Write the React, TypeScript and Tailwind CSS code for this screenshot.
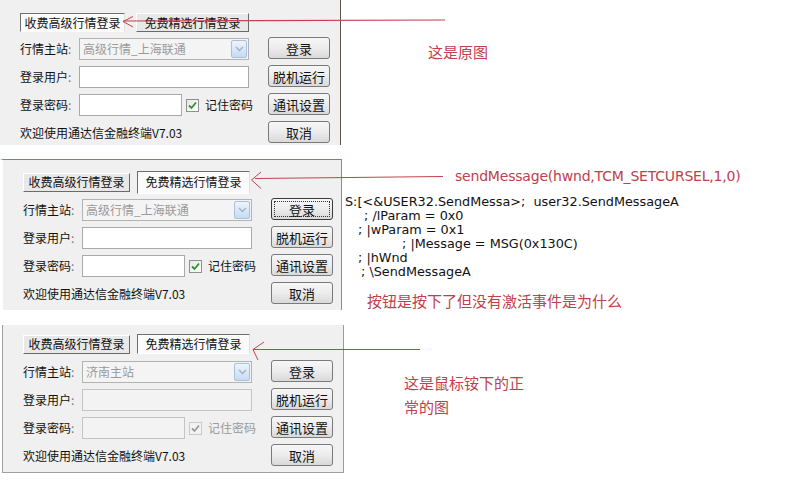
import React from "react";

const CJK = "font-['Noto_Sans_CJK_SC','Noto_Sans',sans-serif]";

function WinButton({ label, focused = false }: { label: string; focused?: boolean }) {
  return (
    <div
      className={`w-[62px] h-[22px] rounded-[3px] border ${
        focused ? "border-[#3a3a3a]" : "border-[#7a7a7a]"
      } bg-gradient-to-b from-[#f7f7f7] via-[#ececec] to-[#d9d9d9] flex items-center justify-center p-[2px]`}
    >
      <div
        className={`w-full h-full flex items-center justify-center text-[13px] leading-none text-[#111] ${
          focused ? "border border-dotted border-[#333]" : ""
        }`}
      >
        {label}
      </div>
    </div>
  );
}

function Check({ disabled = false }: { disabled?: boolean }) {
  return (
    <div
      className={`w-[13px] h-[13px] shrink-0 border ${
        disabled ? "border-[#c9c9c9] bg-[#f3f3f3]" : "border-[#8e8f8f] bg-gradient-to-br from-[#e6e6e6] to-white"
      } flex items-center justify-center`}
    >
      <svg width="11" height="11" viewBox="0 0 11 11">
        <path
          d="M2 5.5 L4.5 8 L9 2.5"
          fill="none"
          stroke={disabled ? "#9a9a9a" : "#2e8f2e"}
          strokeWidth="1.8"
        />
      </svg>
    </div>
  );
}

function Combo({ text }: { text: string }) {
  return (
    <div className="w-[170px] h-[22px] shrink-0 border border-[#b3b3b3] bg-[#f4f4f4] flex items-center justify-between pl-[3px] pr-[1px]">
      <span className="text-[12px] leading-none text-[#9a9a9a] whitespace-nowrap">{text}</span>
      <div className="w-[16px] h-[18px] rounded-[2px] border border-[#a9c0dc] bg-gradient-to-b from-[#eef4fc] to-[#c7dbf2] flex items-center justify-center">
        <svg width="9" height="6" viewBox="0 0 9 6">
          <path d="M1 1 L4.5 4.5 L8 1" fill="none" stroke="#9fb2cc" strokeWidth="1.4" />
        </svg>
      </div>
    </div>
  );
}

function Input({ w, disabled = false }: { w: string; disabled?: boolean }) {
  return (
    <div
      className={`${w} h-[22px] shrink-0 border ${
        disabled ? "border-[#c4c4c4] bg-[#f3f3f3]" : "border-[#a9a9a9] bg-white"
      }`}
    />
  );
}

function Label({ text }: { text: string }) {
  return (
    <div className="w-[59px] shrink-0 text-[12px] leading-none text-[#111] whitespace-nowrap">
      {text}
      <span className="text-[#777]">:</span>
    </div>
  );
}

function Tab({ text, selected, w, h }: { text: string; selected: boolean; w: string; h: string }) {
  return (
    <div
      className={`${w} ${h} shrink-0 whitespace-nowrap flex items-center justify-center text-[12px] leading-none text-[#111] ${
        selected
          ? "bg-[#fbfbfb] border-t border-l border-t-[#6f6f6f] border-l-[#6f6f6f] border-r border-b border-r-[#e0e0e0] border-b-[#ffffff]"
          : "bg-[#e8e8e8] border-t border-l border-t-white border-l-white border-r border-b border-r-[#6a6a6a] border-b-[#6a6a6a]"
      }`}
    >
      {text}
    </div>
  );
}

function Form({
  combo,
  disabled = false,
  focusLogin = false,
}: {
  combo: string;
  disabled?: boolean;
  focusLogin?: boolean;
}) {
  return (
    <div className="flex mt-[5px]">
      <div className="w-[230px] shrink-0 flex flex-col gap-[6px] pt-[1px]">
        <div className="h-[22px] flex items-center">
          <Label text="行情主站" />
          <Combo text={combo} />
        </div>
        <div className="h-[22px] flex items-center">
          <Label text="登录用户" />
          <Input w="w-[170px]" disabled={disabled} />
        </div>
        <div className="h-[22px] flex items-center whitespace-nowrap">
          <Label text="登录密码" />
          <Input w="w-[103px]" disabled={disabled} />
          <div className="ml-[4px]">
            <Check disabled={disabled} />
          </div>
          <span
            className={`ml-[6px] shrink-0 text-[12px] leading-none ${
              disabled ? "text-[#9a9a9a]" : "text-[#111]"
            }`}
          >
            记住密码
          </span>
        </div>
        <div className="h-[22px] flex items-center text-[12px] leading-none text-[#111] whitespace-nowrap">
          欢迎使用通达信金融终端V7.03
        </div>
      </div>
      <div className="ml-[18px] flex flex-col gap-[6px]">
        <WinButton label="登录" focused={focusLogin} />
        <WinButton label="脱机运行" />
        <WinButton label="通讯设置" />
        <WinButton label="取消" />
      </div>
    </div>
  );
}

export default function App() {
  return (
    <div className={`relative w-[800px] h-[498px] bg-white overflow-hidden ${CJK}`}>
      {/* Section 1 */}
      <div className="flex h-[145px]">
        <div className="w-[341px] shrink-0 bg-[#f0f0f0] border-r border-[#5e544a] pl-[20px] pt-[13px]">
          <div className="flex items-start gap-[11px]">
            <Tab text="收费高级行情登录" selected={true} w="w-[105px]" h="h-[19px]" />
            <Tab text="免费精选行情登录" selected={false} w="w-[113px]" h="h-[19px]" />
          </div>
          <Form combo="高级行情_上海联通" />
        </div>
        <div className="flex-1 pl-[87px] pt-[42px]">
          <div className="text-[15px] leading-[20px] text-[#c0404c]">这是原图</div>
        </div>
      </div>

      <div className="h-[14px]" />

      {/* Section 2 */}
      <div className="flex h-[151px]">
        <div className="w-[342px] shrink-0 bg-[#f0f0f0] border-t border-t-[#b46a6a] border-l-[3px] border-l-white border-r border-r-[#8c8c8c] pl-[20px] pt-[10px]">
          <div className="flex items-center gap-[7px] h-[24px]">
            <Tab text="收费高级行情登录" selected={false} w="w-[107px]" h="h-[19px]" />
            <Tab text="免费精选行情登录" selected={true} w="w-[113px]" h="h-[23px]" />
          </div>
          <div className="-mt-[1px]">
            <Form combo="高级行情_上海联通" focusLogin={true} />
          </div>
        </div>
        <div className="flex-1 flex flex-col">
          <div className="pl-[113px] pt-[8px] font-['DejaVu_Sans',sans-serif] text-[14px] leading-[18px] text-[#c0404c] tracking-[-0.2px] whitespace-nowrap">
            sendMessage(hwnd,TCM_SETCURSEL,1,0)
          </div>
          <div className="ml-[15px] mt-[7px] w-[343px] h-[2px] bg-[#c8c8c8]" />
          <div className="mt-[3px] font-['DejaVu_Sans',sans-serif] text-[12.8px] leading-[14px] text-[#111] whitespace-pre">
            <div className="pl-[3px]">S:[&lt;&amp;USER32.SendMessa&gt;;  user32.SendMessageA</div>
            <div className="pl-[22px]">; /lParam = 0x0</div>
            <div className="pl-[16px]">; |wParam = 0x1</div>
            <div className="pl-[60px]">; |Message = MSG(0x130C)</div>
            <div className="pl-[16px]">; |hWnd</div>
            <div className="pl-[19px]">; \SendMessageA</div>
          </div>
          <div className="pl-[25px] mt-[12px] text-[15px] leading-[20px] text-[#c0404c] whitespace-nowrap">
            按钮是按下了但没有激活事件是为什么
          </div>
        </div>
      </div>

      <div className="h-[15px]" />

      {/* Section 3 */}
      <div className="flex h-[148px]">
        <div className="w-[342px] shrink-0 bg-[#f0f0f0] border-l border-l-[#a0a0a0] ml-[2px] border-b border-b-[#a0a0a0] border-r border-r-[#9a9a9a] pl-[20px] pt-[8px]">
          <div className="flex items-center gap-[7px] h-[22px]">
            <Tab text="收费高级行情登录" selected={false} w="w-[107px]" h="h-[19px]" />
            <Tab text="免费精选行情登录" selected={true} w="w-[113px]" h="h-[20px]" />
          </div>
          <Form combo="济南主站" disabled={true} />
        </div>
        <div className="flex-1 pl-[60px] pt-[46px]">
          <div className="text-[15px] leading-[24px] text-[#c0404c]">
            这是鼠标铵下的正
            <br />
            常的图
          </div>
        </div>
      </div>

      {/* Red annotation arrows */}
      <svg
        className="absolute left-0 top-0 z-10 pointer-events-none"
        width="800"
        height="498"
        viewBox="0 0 800 498"
      >
        <path d="M123 21 L445 20" fill="none" stroke="#c8404e" strokeWidth="1.2" />
        <polyline points="133,16.5 123,21.5 133,27" fill="none" stroke="#c8404e" strokeWidth="1" />
        <path d="M255 178.5 L443 176.5" fill="none" stroke="#c8404e" strokeWidth="1" />
        <polyline points="261,172 251.5,180 261,188.5" fill="none" stroke="#c8404e" strokeWidth="1" />
        <path d="M253 349.5 L420 349.5" fill="none" stroke="#c8404e" strokeWidth="1" />
        <polyline points="264,342 253,349.5 258,360" fill="none" stroke="#c8404e" strokeWidth="1" />
      </svg>
    </div>
  );
}
